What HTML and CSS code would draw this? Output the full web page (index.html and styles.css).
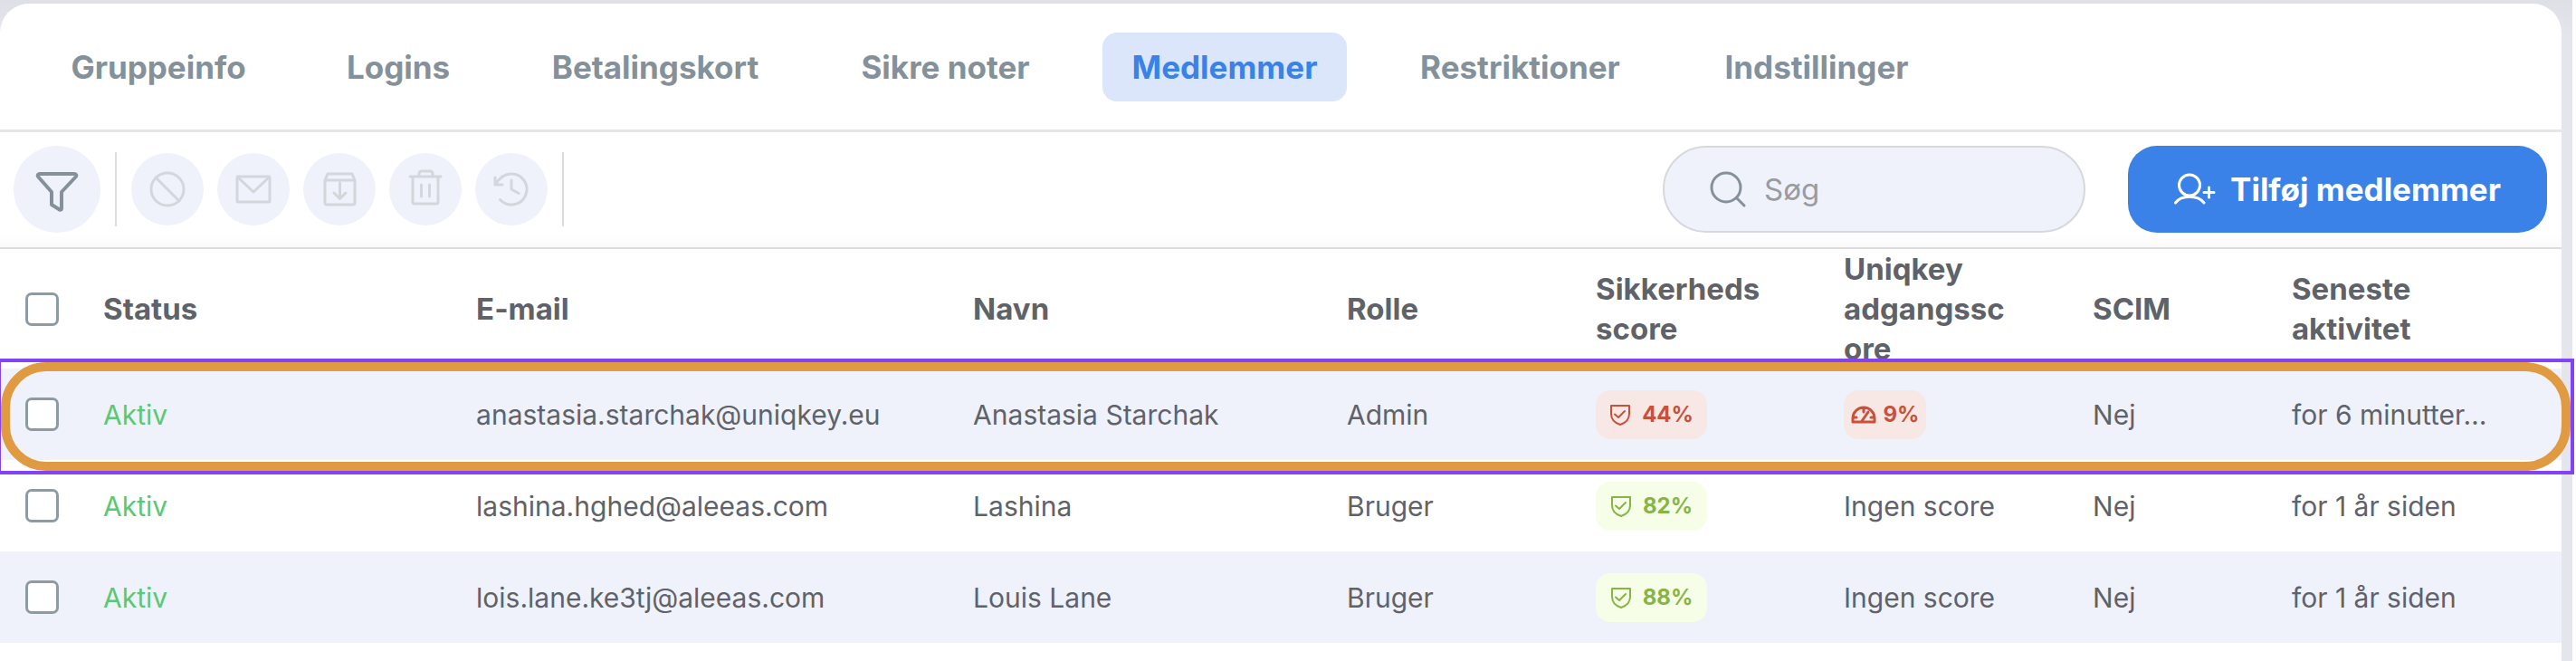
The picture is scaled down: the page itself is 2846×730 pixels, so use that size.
FILE: index.html
```html
<!DOCTYPE html>
<html lang="da">
<head>
<meta charset="utf-8">
<meta name="viewport" content="width=device-width, initial-scale=1">
<title>Medlemmer</title>
<link rel="stylesheet" href="styles.css">
</head>
<body>
<svg class="sprite" aria-hidden="true">
  <symbol id="shield" viewBox="0 0 24 24"><path d="M2 2h20v9c0 6-4 10-10 12C6 21 2 17 2 11z"/><path d="M6 11.500l4 3.500 7-7"/></symbol>
</svg>
<div class="page">
  <main class="card">
    <nav class="tabs">
      <a class="tab" href="#">Gruppeinfo</a>
      <a class="tab" href="#">Logins</a>
      <a class="tab" href="#">Betalingskort</a>
      <a class="tab" href="#">Sikre noter</a>
      <a class="tab tab-active" href="#" aria-current="page">Medlemmer</a>
      <a class="tab" href="#">Restriktioner</a>
      <a class="tab" href="#">Indstillinger</a>
    </nav>

    <div class="toolbar">
      <button class="round round-large" type="button" aria-label="Filtrer">
        <svg viewBox="0 0 96 96"><path d="M29 31h38c2 0 3 2 2 3L53 51v18c0 2-2 2-3 1l-8-5V51L27 34c-1-1 0-3 2-3z"/></svg>
      </button>
      <span class="divider"></span>
      <div class="actions">
        <button class="round" type="button" aria-label="Bloker" disabled>
          <svg viewBox="0 0 80 80"><circle cx="40" cy="40" r="18"/><path d="M27 27l26 26"/></svg>
        </button>
        <button class="round" type="button" aria-label="Send mail" disabled>
          <svg viewBox="0 0 80 80"><rect x="22" y="26" width="36" height="28" rx="1"/><path d="M23 27l17 16 17-16"/></svg>
        </button>
        <button class="round" type="button" aria-label="Arkiver" disabled>
          <svg viewBox="0 0 80 80"><path d="M24 30v25q0 2 2 2h29q2 0 2-2V30l-3-7H27zM24 30h33M40.500 33v17M34 44l6.500 6.500L47 44"/></svg>
        </button>
        <button class="round" type="button" aria-label="Slet" disabled>
          <svg viewBox="0 0 80 80"><path d="M23 26h34M26 26v28q0 2 2 2h24q2 0 2-2V26M33 26v-3q0-3 3-3h9q3 0 3 3v3M35.500 35v13M44.500 35v13"/></svg>
        </button>
        <button class="round" type="button" aria-label="Gendan" disabled>
          <svg viewBox="0 0 80 80"><path d="M22 27v8h8M22 35C27 27 33 23 40 23a17 17 0 1 1-12.500 28.500M40 30v10l8 4.500"/></svg>
        </button>
      </div>
      <span class="divider"></span>

      <label class="search">
        <svg viewBox="0 0 40 40"><circle cx="18" cy="18" r="16"/><path d="M29.500 29.500L38 38"/></svg>
        <input type="search" placeholder="Søg" aria-label="Søg">
      </label>
      <button class="add" type="button">
        <svg viewBox="0 0 46 36"><circle cx="17" cy="13.500" r="11.500"/><path d="M1.500 33C8 24 26 24 33 33M38.500 16v11M33 21.500h11"/></svg>
        Tilføj medlemmer
      </button>
    </div>

    <div class="members">
      <table>
        <colgroup>
          <col class="c-check"><col class="c-status"><col class="c-mail"><col class="c-name"><col class="c-role"><col class="c-score"><col class="c-access"><col class="c-scim"><col class="c-last">
        </colgroup>
        <thead>
          <tr>
            <th class="check"><input type="checkbox" aria-label="Vælg alle"></th>
            <th>Status</th><th>E-mail</th><th>Navn</th><th>Rolle</th>
            <th>Sikkerheds<br>score</th><th>Uniqkey<br>adgangssc<br>ore</th><th>SCIM</th><th>Seneste<br>aktivitet</th>
          </tr>
        </thead>
        <tbody>
          <tr>
            <td class="check"><input type="checkbox" aria-label="Vælg Anastasia Starchak"></td>
            <td class="active">Aktiv</td><td>anastasia.starchak@uniqkey.eu</td><td>Anastasia Starchak</td><td>Admin</td>
            <td><span class="pill low"><svg class="shield"><use href="#shield"/></svg>44%</span></td>
            <td><span class="pill low pill-small"><svg class="gauge" viewBox="0 0 28 20"><path d="M2 18v-4a12 12 0 0 1 24 0v4zM14 3v4M3 13h3M22 13h3M12 17l7-10"/></svg>9%</span></td>
            <td>Nej</td><td>for 6 minutter…</td>
          </tr>
          <tr>
            <td class="check"><input type="checkbox" aria-label="Vælg Lashina"></td>
            <td class="active">Aktiv</td><td>lashina.hghed@aleeas.com</td><td>Lashina</td><td>Bruger</td>
            <td><span class="pill high"><svg class="shield"><use href="#shield"/></svg>82%</span></td>
            <td>Ingen score</td><td>Nej</td><td>for 1 år siden</td>
          </tr>
          <tr>
            <td class="check"><input type="checkbox" aria-label="Vælg Louis Lane"></td>
            <td class="active">Aktiv</td><td>lois.lane.ke3tj@aleeas.com</td><td>Louis Lane</td><td>Bruger</td>
            <td><span class="pill high"><svg class="shield"><use href="#shield"/></svg>88%</span></td>
            <td>Ingen score</td><td>Nej</td><td>for 1 år siden</td>
          </tr>
        </tbody>
      </table>
      <div class="marker"><div class="marker-ring"></div></div>
    </div>
  </main>
</div>
</body>
</html>
```

FILE: styles.css
```css
* { box-sizing: border-box; }

body {
  margin: 0;
  background: #fff;
  color: #5f6269;
  font-family: Inter, "Open Sans", sans-serif;
  font-size: 30px;
}

button, input { font: inherit; }

svg {
  display: block;
  fill: none;
  stroke: currentColor;
  stroke-width: 3;
  stroke-linecap: round;
  stroke-linejoin: round;
}

.sprite { position: absolute; width: 0; height: 0; }

.page {
  min-height: 100vh;
  margin-right: 4px;
  padding: 4px 12px 0 0;
  background: linear-gradient(#dfe0e6, #e5e6ed 40px);
  display: flex;
}

.card {
  flex: 1;
  min-width: 0;
  background: #fff;
  border-radius: 32px 32px 0 0;
}

.tabs {
  display: grid;
  grid-template-columns: 256px 174px 294px 247px 270px 283px 272px;
  gap: 50px;
  padding: 32px 47px 31px;
  border-bottom: 3px solid #e6e6e6;
}

.tab {
  display: flex;
  align-items: center;
  justify-content: center;
  height: 76px;
  border-radius: 16px;
  color: #84919a;
  font-size: 35px;
  font-weight: 700;
  text-decoration: none;
  white-space: nowrap;
}

.tab-active { background: #dbe6fa; color: #3b82e8; }

.toolbar {
  display: flex;
  align-items: center;
  gap: 16px;
  padding: 15px 16px 16px 15px;
  border-bottom: 2px solid #dcdcdd;
  background: linear-gradient(to top, #fafafa, #fff 14px);
}

.round {
  width: 80px;
  height: 80px;
  padding: 0;
  border: 0;
  border-radius: 50%;
  background: #eff2fa;
  color: #d3d7db;
}

.round-large { width: 96px; height: 96px; color: #84919a; }

.round-large svg { stroke-width: 4; }

.divider { width: 2px; height: 82px; background: #dcdcdd; }

.actions { display: flex; gap: 15px; }

.search {
  display: flex;
  align-items: center;
  gap: 20px;
  width: 467px;
  height: 96px;
  margin-left: auto;
  padding: 0 50px;
  border: 2px solid #d5d9dd;
  border-radius: 48px;
  background: #eff2fa;
  color: #84919a;
}

.search svg { flex: none; width: 40px; height: 40px; }

.search input {
  flex: 1;
  min-width: 0;
  padding: 0;
  border: 0;
  outline: 0;
  background: none;
  color: #5f6269;
  font-size: 33px;
}

.search input::placeholder { color: #999b9f; opacity: 1; }

.add {
  display: flex;
  align-items: center;
  justify-content: center;
  gap: 16px;
  width: 463px;
  height: 96px;
  margin-left: 31px;
  padding: 0;
  border: 0;
  border-radius: 32px;
  background: #3b82e8;
  color: #fff;
  font-size: 35px;
  font-weight: 700;
  white-space: nowrap;
}

.add svg { width: 46px; height: 36px; }

.members { position: relative; }

table {
  width: 100%;
  border-collapse: collapse;
  table-layout: fixed;
}

.c-check { width: 4.03%; }
.c-status { width: 14.56%; }
.c-mail { width: 19.4%; }
.c-name { width: 14.59%; }
.c-role { width: 9.72%; }
.c-score { width: 9.68%; }
.c-access { width: 9.72%; }
.c-scim { width: 7.77%; }
.c-last { width: 10.53%; }

th, td {
  padding: 0;
  text-align: left;
  vertical-align: middle;
  white-space: nowrap;
}

th {
  height: 132px;
  font-size: 33px;
  font-weight: 700;
  line-height: 44px;
}

td { height: 101px; }

tbody tr:nth-child(odd) { background: #eff2fa; }

.check { padding-left: 28px; }

.check input {
  display: block;
  appearance: none;
  width: 37px;
  height: 37px;
  margin: 0;
  border: 3px solid #8e9ba3;
  border-radius: 7px;
  background: #fff;
}

.active { color: #5bc873; }

.pill {
  display: inline-flex;
  align-items: center;
  justify-content: center;
  gap: 12px;
  min-width: 123px;
  height: 54px;
  border-radius: 16px;
  font-size: 24px;
  font-weight: 700;
  vertical-align: middle;
}

.pill-small { gap: 8px; min-width: 91px; }

.low { background: #f7e8e6; color: #c9503b; }
.high { background: #f6fee8; color: #86b544; }

.shield { width: 24px; height: 24px; stroke-width: 2; }
.gauge { width: 28px; height: 20px; }

/* Frame drawn over the selected member row */
.marker {
  position: absolute;
  top: 121px;
  left: 0;
  right: -14px;
  height: 128px;
  border: solid #8143f5;
  border-width: 4px 4px 4px 1px;
  pointer-events: none;
}

.marker-ring {
  height: 100%;
  border: 10px solid #e09a42;
  border-radius: 50px;
}
```
